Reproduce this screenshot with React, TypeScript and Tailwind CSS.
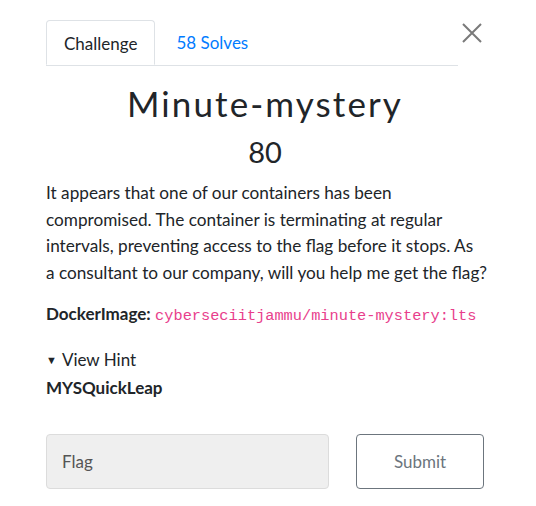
export default function App() {
  return (
    <div className="min-h-[506px] w-[536px] bg-white font-['Lato',sans-serif] text-[#212529]">
      <div className="pl-[46px] pr-[52px] pt-5">
        {/* tabs + close */}
        <div className="flex items-start">
          <nav className="flex w-[412px] border-b border-[#dee2e6]">
            <div className="-mb-px h-[45px] rounded-t-[4px] border border-b-white border-[#dee2e6] bg-white px-[17px] pt-[10px] text-[17px] leading-[26px] text-[#212529]">
              Challenge
            </div>
            <div className="h-[45px] px-[21px] pt-[10px] text-[17px] leading-[26px] text-[#007bff]">58 Solves</div>
          </nav>
          <button className="ml-1 mt-[3px] flex h-[20px] w-[20px] items-center justify-center">
            <svg width="20" height="20" viewBox="0 0 20 20" fill="none">
              <path d="M1 1L19 19M19 1L1 19" stroke="#7a7a7a" strokeWidth="2" />
            </svg>
          </button>
        </div>

        <div className="w-[438px]">
          <h2 className="mt-[16px] text-center text-[35px] font-normal leading-[42px] tracking-[2.1px] text-[#212529]">
            Minute-mystery
          </h2>
          <h3 className="mt-[10px] text-center text-[29px] leading-[36px] text-[#212529]">80</h3>

          <p className="mt-[10px] w-[444px] text-[17.2px] leading-[26.7px] text-[#212529]">
            It appears that one of our containers has been compromised. The container is terminating at regular
            intervals, preventing access to the flag before it stops. As
            <br />a consultant to our company, will you help me get the flag?
          </p>

          <p className="mt-[14px] text-[17px] leading-[26px]">
            <span className="font-bold">DockerImage:</span>{" "}
            <code className="font-['Liberation_Mono',monospace] text-[15.3px] text-[#e83e8c]">
              cyberseciitjammu/minute-mystery:lts
            </code>
          </p>

          <div className="mt-[18px] text-[17px] leading-[26px]">
            <div className="flex items-center">
              <span className="mr-[5px] text-[11px]">▼</span>
              <span>View Hint</span>
            </div>
            <div className="mt-[2px] font-bold">MYSQuickLeap</div>
          </div>

          <div className="mt-[33px] flex items-center">
            <div className="flex h-[55px] w-[283px] items-center rounded-[4px] border border-[#dcdcdc] bg-[#efefef] px-[15px] text-[17px] text-[#555]">
              Flag
            </div>
            <button className="ml-[27px] h-[55px] w-[128px] rounded-[4px] border border-[#6c757d] bg-white text-[17px] text-[#6c757d]">
              Submit
            </button>
          </div>
        </div>
      </div>
    </div>
  );
}
